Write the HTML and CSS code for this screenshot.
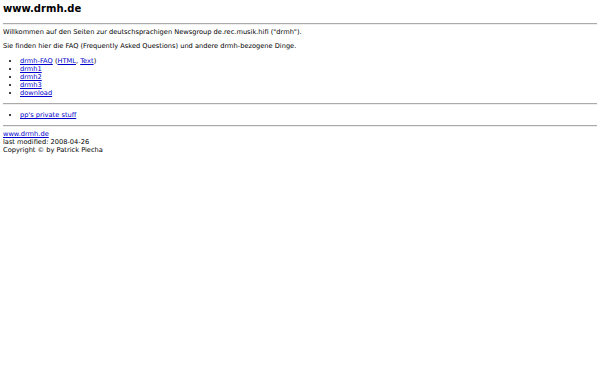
FILE: index.html
```html
<!DOCTYPE html>
<html lang="de">
  <head>
    <meta charset="UTF-8" />
    <title>www.drmh.de</title>
    <link rel="stylesheet" href="styles.css">
  </head>
  <body>
    <h1 class="title">www.drmh.de</h1>
    <hr />
    <p class="intro">Willkommen auf den Seiten zur deutschsprachigen Newsgroup de.rec.musik.hifi ("drmh").</p>
    <p class="lead">Sie finden hier die FAQ (Frequently Asked Questions) und andere drmh-bezogene Dinge.</p>
    <ul class="links">
      <li><a href="#">drmh-FAQ</a> (<a href="#">HTML</a>, <a href="#">Text</a>)</li>
      <li><a href="#">drmh1</a></li>
      <li><a href="#">drmh2</a></li>
      <li><a href="#">drmh3</a></li>
      <li><a href="#">download</a></li>
    </ul>
    <hr />
    <ul class="links">
      <li><a href="#">pp's private stuff</a></li>
    </ul>
    <hr />
    <div class="footer">
      <a href="#">www.drmh.de</a><br />
      last modified: 2008-04-26<br />
      Copyright &copy; by Patrick Piecha
    </div>
  </body>
</html>
```

FILE: styles.css
```css
body {
  margin: 3px;
  font-family: "DejaVu Sans", Verdana, sans-serif;
  font-size: 6.65px;
  line-height: 8px;
  color: #000;
  background: #fff;
}
a {
  color: #00c;
}
.title {
  font-size: 10px;
  line-height: 12px;
  font-weight: bold;
  margin: 0 0 8px;
}
hr {
  border: none;
  border-top: 1px solid #aaa;
  border-bottom: 1px solid #eee;
  margin: 0;
}
p {
  margin: 6px 0;
}
.intro {
  margin-top: 3px;
}
.lead {
  margin-bottom: 7px;
}
.links {
  margin: 6px 0;
  padding-left: 17px;
}
.footer {
  margin-top: 3px;
}
```
